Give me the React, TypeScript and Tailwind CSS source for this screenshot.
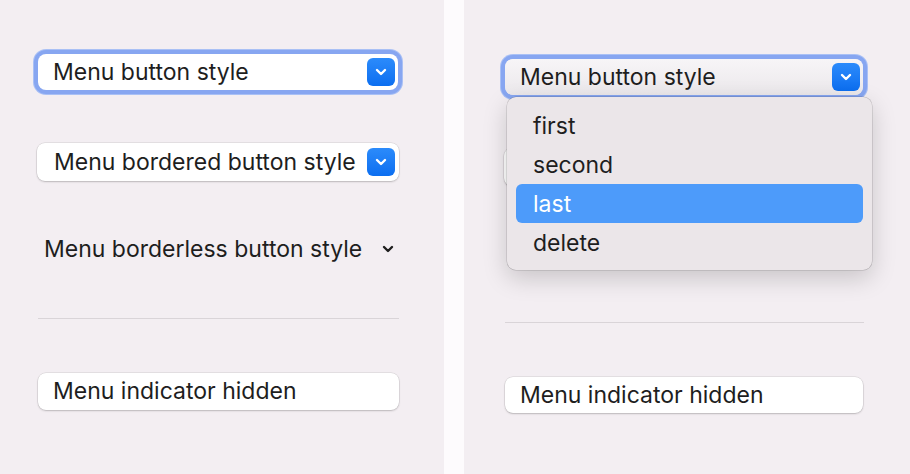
import React from "react";

const Chevron = ({ className = "" }: { className?: string }) => (
  <svg viewBox="0 0 12 8" className={className} fill="none">
    <path d="M2 2 L6 6 L10 2" stroke="currentColor" strokeWidth="2.4" strokeLinecap="round" strokeLinejoin="round" />
  </svg>
);

const BlueBox = () => (
  <div className="flex h-[28px] w-[28px] items-center justify-center rounded-[6px] bg-gradient-to-b from-[#2b8bfb] to-[#0b6ef0] text-white">
    <Chevron className="h-[8px] w-[12px]" />
  </div>
);

const font = { fontFamily: "Inter, 'Noto Sans', sans-serif" };

function Panel({ right }: { right?: boolean }) {
  return (
    <div className={right ? "relative flex-1 pl-[41px] pt-[59px]" : "relative w-[444px] pl-[38px] pt-[54px]"}>
      {/* Menu button style (focused) */}
      <div
        className={
          "flex h-[36px] items-center justify-between rounded-[8px] pl-[15px] pr-[3px] shadow-[0_0_0_4px_#87a6f1,0_0_0_5px_#a9c0f5] " +
          (right ? "w-[358px] bg-gradient-to-b from-[#f7f5f7] to-[#ebe8eb]" : "w-[360px] bg-white")
        }
      >
        <span className="text-[23px] text-[#1e1e1e]">Menu button style</span>
        <BlueBox />
      </div>

      {/* Bordered */}
      <div className="ml-[-1px] mt-[53px] flex h-[38px] w-[362px] items-center justify-between rounded-[8px] bg-white pl-[17px] pr-[4px] shadow-[0_0_0_0.5px_rgba(0,0,0,0.12),0_1px_2px_rgba(0,0,0,0.18)]">
        {!right && <span className="text-[23px] text-[#1e1e1e]">Menu bordered button style</span>}
        {!right && <BlueBox />}
      </div>

      {/* Borderless */}
      <div className="mt-[53px] flex h-[30px] w-[358px] items-center justify-between pl-[6px] pr-[2px]">
        {!right && <span className="text-[23px] text-[#1e1e1e]">Menu borderless button style</span>}
        {!right && <Chevron className="h-[8px] w-[12px] text-[#1e1e1e]" />}
      </div>

      {/* Divider */}
      <div className={(right ? "mt-[53px] w-[359px]" : "mt-[54px] w-[361px]") + " h-px bg-[#d9d4d8]"} />

      {/* Indicator hidden */}
      <div
        className={
          (right ? "mt-[54px] h-[36px] w-[358px]" : "mt-[54px] h-[37px] w-[361px]") +
          " flex items-center rounded-[8px] bg-white pl-[15px] shadow-[0_0_0_0.5px_rgba(0,0,0,0.12),0_1px_2px_rgba(0,0,0,0.18)]"
        }
      >
        <span className="text-[23px] text-[#1e1e1e]">Menu indicator hidden</span>
      </div>

      {right && (
        <div className="absolute left-[43px] top-[97px] flex w-[365px] flex-col rounded-[9px] bg-[#ebe6e9] px-[9px] pb-[8px] pt-[9px] shadow-[0_0_0_0.5px_rgba(0,0,0,0.2),0_8px_24px_rgba(0,0,0,0.18)]">
          {["first", "second", "last", "delete"].map((t) => (
            <div
              key={t}
              className={
                "flex h-[39px] items-center rounded-[6px] pl-[17px] pt-[2px] text-[23px] " +
                (t === "last" ? "bg-[#4d9bfa] text-white" : "text-[#1e1e1e]")
              }
            >
              {t}
            </div>
          ))}
        </div>
      )}
    </div>
  );
}

export default function App() {
  return (
    <div className="flex h-[474px] w-[910px] bg-[#f3eef2]" style={font}>
      <Panel />
      <div className="w-[20px] bg-[#fdfbfd]" />
      <Panel right />
    </div>
  );
}
